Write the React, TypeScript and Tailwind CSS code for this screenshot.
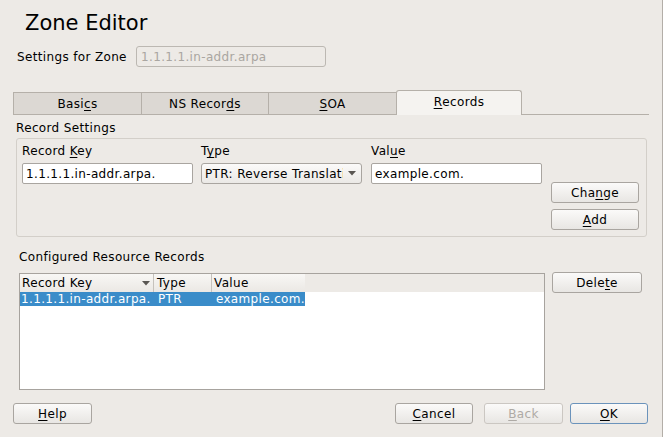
import React from 'react';

const U = ({ children }: { children: React.ReactNode }) => (
  <span className="underline decoration-1 underline-offset-[2px]">{children}</span>
);

const Arrow = () => (
  <svg width="8" height="5" viewBox="0 0 8 5" className="shrink-0">
    <polygon points="0,0 8,0 4,4.5" fill="#5a5753" />
  </svg>
);

const Button = ({
  children,
  className = '',
  disabled = false,
  primary = false,
}: {
  children: React.ReactNode;
  className?: string;
  disabled?: boolean;
  primary?: boolean;
}) => (
  <button
    className={`h-[21px] rounded-[3px] border bg-linear-to-b from-[#fbfaf9] to-[#e8e6e3] text-[12px] leading-[14px] tracking-[0.35px] flex items-center justify-center ${
      primary ? 'border-[#6b93bb]' : disabled ? 'border-[#cbc7c2]' : 'border-[#a9a5a0]'
    } ${disabled ? 'text-[#aeaaa5]' : 'text-black'} ${className}`}
  >
    {children}
  </button>
);

const Field = ({ value, className = '' }: { value: string; className?: string }) => (
  <div
    className={`h-[21px] rounded-[2px] border border-[#a9a5a0] bg-white pl-[3px] flex items-center whitespace-nowrap overflow-hidden ${className}`}
  >
    {value}
  </div>
);

export default function App() {
  return (
    <div className="w-[663px] h-[437px] bg-[#edeae6] border-r border-[#b3aea8] font-['DejaVu_Sans',sans-serif] text-[12px] leading-[14px] tracking-[0.35px] text-black flex flex-col overflow-hidden">
      {/* Title */}
      <h1 className="pt-[10px] pl-[25px] text-[21px] leading-[26px] tracking-normal font-normal">Zone Editor</h1>

      {/* Zone */}
      <div className="mt-[10px] ml-[17px] h-[21px] flex items-center">
        <span className="w-[119px]">Settings for Zone</span>
        <div className="w-[190px] h-[21px] rounded-[3px] border border-[#bcb8b2] pl-[4px] flex items-center text-[#aaa6a1]">
          1.1.1.1.in-addr.arpa
        </div>
      </div>

      {/* Tabs */}
      <div className="mt-[23px] ml-[13px] w-[636px] h-[25px] flex items-end">
        <div className="w-[128px] h-[23px] border-t border-l border-b border-[#b5b0a9] bg-[#dcd8d3] flex items-center justify-center">
          Basi<U>c</U>s
        </div>
        <div className="w-[127px] h-[23px] border-t border-l border-b border-[#b5b0a9] bg-[#dcd8d3] flex items-center justify-center">
          NS Recor<U>d</U>s
        </div>
        <div className="w-[128px] h-[23px] border-t border-l border-b border-[#b5b0a9] bg-[#dcd8d3] flex items-center justify-center">
          <U>S</U>OA
        </div>
        <div className="w-[126px] h-[25px] border-t border-l border-r border-[#b5b0a9] rounded-t-[3px] bg-[#f5f3f0] pb-[2px] flex items-center justify-center">
          <U>R</U>ecords
        </div>
        <div className="flex-1 border-b border-[#b5b0a9]" />
      </div>

      {/* Record settings */}
      <div className="mt-[6px] ml-[16px]">Record Settings</div>
      <div className="mt-[3px] ml-[16px] w-[631px] h-[99px] border border-[#d3cfc9] rounded-[3px] pt-[5px] pl-[5px] flex items-start">
        <div className="w-[171px] flex flex-col">
          <span>
            Record <U>K</U>ey
          </span>
          <Field value="1.1.1.1.in-addr.arpa." className="mt-[5px]" />
        </div>
        <div className="ml-[8px] w-[161px] flex flex-col">
          <span>
            T<U>y</U>pe
          </span>
          <div className="mt-[5px] h-[21px] rounded-[3px] border border-[#a9a5a0] bg-linear-to-b from-[#fbfaf9] to-[#ebe9e6] pl-[3px] flex items-center">
            <span className="w-[138px] overflow-hidden whitespace-nowrap">PTR: Reverse Translation</span>
            <span className="ml-[5px]">
              <Arrow />
            </span>
          </div>
        </div>
        <div className="ml-[9px] w-[171px] flex flex-col">
          <span>
            Val<U>u</U>e
          </span>
          <Field value="example.com." className="mt-[5px]" />
        </div>
        <div className="ml-[9px] mt-[38px] w-[88px] flex flex-col gap-[6px]">
          <Button className="w-[88px]">
            Cha<U>n</U>ge
          </Button>
          <Button className="w-[88px]">
            <U>A</U>dd
          </Button>
        </div>
      </div>

      {/* Configured records */}
      <div className="mt-[13px] ml-[19px]">Configured Resource Records</div>
      <div className="mt-[9px] ml-[19px] flex items-start">
        <div className="w-[526px] h-[117px] border border-[#a7a39e] bg-white flex flex-col">
          <div className="h-[18px] bg-[#edeae6] flex">
            <div className="w-[134px] border-r border-[#c6c2bc] bg-linear-to-b from-[#f8f7f5] to-[#ebe8e4] pl-[2px] pr-[3px] flex items-center">
              <span>Record Key</span>
              <span className="ml-auto">
                <Arrow />
              </span>
            </div>
            <div className="w-[58px] border-r border-[#c6c2bc] bg-linear-to-b from-[#f8f7f5] to-[#ebe8e4] pl-[3px] flex items-center">
              Type
            </div>
            <div className="w-[93px] bg-linear-to-b from-[#f8f7f5] to-[#ebe8e4] pl-[2px] flex items-center">
              Value
            </div>
          </div>
          <div className="w-[285px] h-[14px] bg-[#3a8cc9] text-white flex">
            <div className="w-[134px] pl-[1px] whitespace-nowrap overflow-hidden">1.1.1.1.in-addr.arpa.</div>
            <div className="w-[58px] pl-[4px]">PTR</div>
            <div className="pl-[4px] whitespace-nowrap">example.com.</div>
          </div>
        </div>
        <Button className="ml-[7px] -mt-px w-[90px]">
          Dele<U>t</U>e
        </Button>
      </div>

      {/* Bottom buttons */}
      <div className="mt-[13px] flex">
        <Button className="ml-[13px] w-[79px]">
          <U>H</U>elp
        </Button>
        <Button className="ml-auto w-[78px]">
          <U>C</U>ancel
        </Button>
        <Button className="ml-[11px] w-[79px]" disabled>
          <U>B</U>ack
        </Button>
        <Button className="ml-[7px] mr-[14px] w-[78px]" primary>
          <U>O</U>K
        </Button>
      </div>
    </div>
  );
}
